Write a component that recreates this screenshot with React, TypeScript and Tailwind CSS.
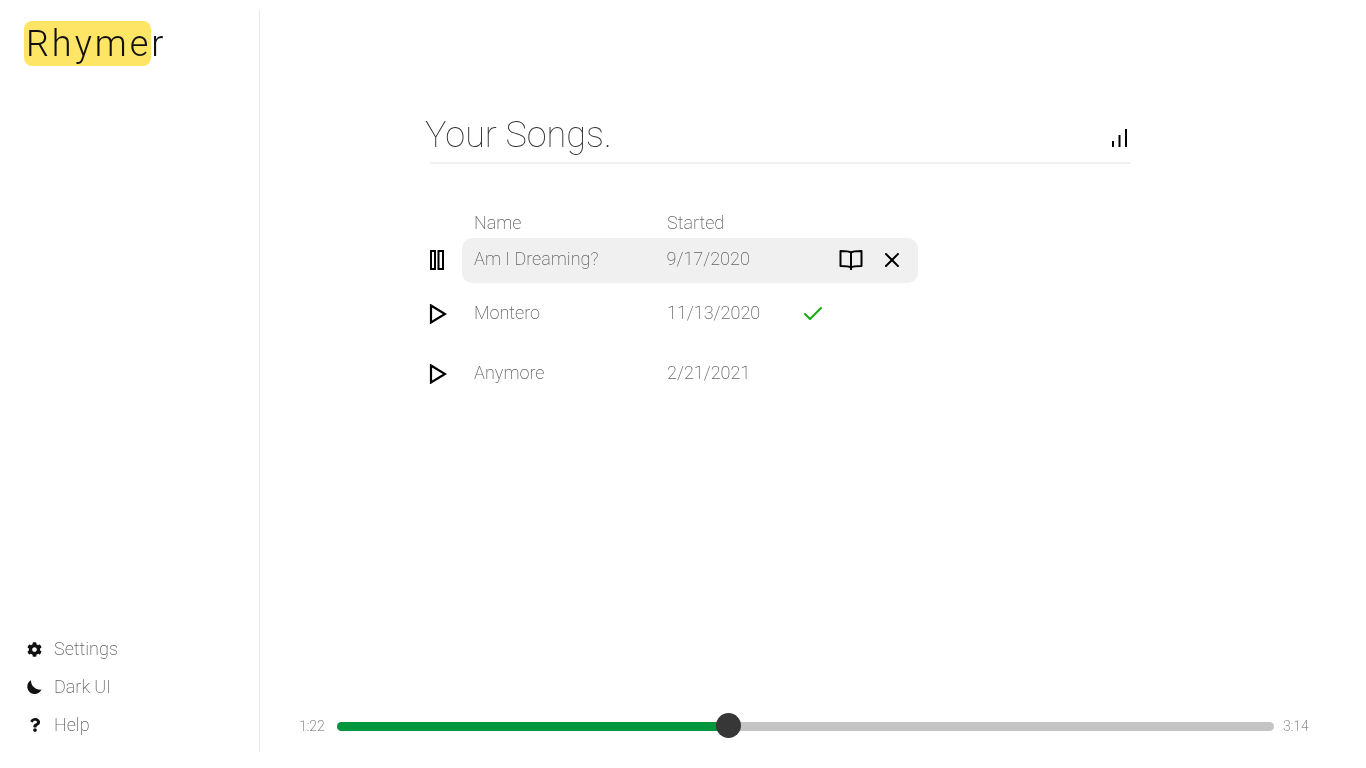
import React from 'react';
import { Check, X } from 'lucide-react';
import { FaCog, FaQuestion } from 'react-icons/fa';

interface Song {
  name: string;
  started: string;
  rowClass: string;
  iconClass: string;
  textClass: string;
}

const songs: Song[] = [
  { name: 'Am I Dreaming?', started: '9/17/2020', rowClass: 'h-[45px]', iconClass: '-mt-[2px]', textClass: '-mt-[5px]' },
  { name: 'Montero', started: '11/13/2020', rowClass: 'h-[45px] mt-[8px]', iconClass: 'mt-[1px]', textClass: '-mt-[3px]' },
  { name: 'Anymore', started: '2/21/2021', rowClass: 'h-[45px] mt-[15px]', iconClass: 'mt-[1px]', textClass: '-mt-[3px]' },
];

const BarsIcon = () => (
  <svg width="16" height="18" viewBox="0 0 16 18" fill="black">
    <rect x="0" y="12" width="2" height="6" />
    <rect x="6.5" y="6" width="2" height="12" />
    <rect x="13" y="0" width="2" height="18" />
  </svg>
);

const PauseIcon = () => (
  <svg width="16" height="20" viewBox="0 0 16 20" fill="none" stroke="black" strokeWidth="2">
    <rect x="2" y="1" width="4" height="18" />
    <rect x="9.5" y="1" width="4.5" height="18" />
  </svg>
);

const PlayIcon = () => (
  <svg width="18" height="20" viewBox="0 0 18 20" fill="none" stroke="black" strokeWidth="2.2" strokeLinejoin="miter">
    <path d="M2 1.5 L16 10 L2 18.5 Z" />
  </svg>
);

const BookIcon = () => (
  <svg width="24" height="22" viewBox="0 0 24 22" fill="none" stroke="black" strokeWidth="2">
    <path d="M12 3.5 C10 2 7 2 1.5 2 L1.5 17 C7 17 10 17 12 18.5 C14 17 17 17 22.5 17 L22.5 2 C17 2 14 2 12 3.5 Z" strokeLinejoin="round" />
    <path d="M12 3.5 L12 21" />
  </svg>
);

const MoonIcon = () => (
  <svg width="16" height="14" viewBox="0 0 16 14" fill="#111" className="overflow-visible">
    <path d="M4 0.2 A7.4 7.4 0 1 0 14.5 9.5 A9 9 0 0 1 4 0.2 Z" />
  </svg>
);

const NavItem = ({ icon, label }: { icon: React.ReactNode; label: string }) => (
  <div className="flex items-center h-[38px]">
    <div className="w-[15px] flex justify-center text-[#111]">{icon}</div>
    <span className="ml-[12px] -mt-[2px] text-[18px] font-extralight text-[#666]">{label}</span>
  </div>
);

export default function App() {
  return (
    <div className="h-[768px] w-[1366px] bg-white overflow-hidden">
      <div className="h-full flex pt-[10px] pb-[16px] [will-change:transform] font-['Roboto',sans-serif]">
        <aside className="w-[260px] shrink-0 border-r border-[#e8e8e8] flex flex-col justify-between pl-[27px] pb-[8px]">
          <div className="-ml-[3px] mt-[11px] text-[36px] leading-[45px] font-light tracking-[3px] text-[#111]">
            <div className="bg-[#ffd400]/60 rounded-lg w-[127px] h-[45px] whitespace-nowrap pl-[2px] pt-[1px]">Rhymer</div>
          </div>
          <nav className="flex flex-col">
            <NavItem icon={<FaCog size={15} />} label="Settings" />
            <NavItem icon={<MoonIcon />} label="Dark UI" />
            <NavItem icon={<FaQuestion size={14} />} label="Help" />
          </nav>
        </aside>

        <main className="flex-1 flex flex-col">
          <div className="flex-1 pl-[165px] pr-[235px]">
            <div className="mt-[102px] flex items-end justify-between h-[52px] ml-[5px] border-b-2 border-[#f2f2f2]">
              <h1 className="-ml-[5px] mb-[3px] text-[36px] leading-[48px] font-thin text-[#333]">Your Songs.</h1>
              <div className="mb-[15px] mr-[3px]"><BarsIcon /></div>
            </div>

            <div className="mt-[45px] ml-[49px] flex text-[18px] leading-[27px] font-extralight text-[#666]">
              <span className="w-[193px]">Name</span>
              <span>Started</span>
            </div>

            <div className="flex flex-col mt-[2px]">
              {songs.map((song, i) => (
                <div key={song.name} className={`flex items-center ${song.rowClass}`}>
                  <div className={`w-[37px] pl-[4px] shrink-0 ${song.iconClass}`}>{i === 0 ? <PauseIcon /> : <PlayIcon />}</div>
                  <div className={`w-[456px] h-[45px] rounded-[10px] flex items-center pl-[12px] pr-[14px] text-[18px] font-extralight text-[#666] ${i === 0 ? 'bg-black/[0.06]' : ''}`}>
                    <span className={`w-[193px] ${song.textClass}`}>{song.name}</span>
                    <span className={`${song.textClass} ${i === 0 ? 'w-[173px]' : 'w-[136px]'}`}>{song.started}</span>
                    {i === 0 && (
                      <>
                        <div className="-mt-[2px]"><BookIcon /></div>
                        <X className="ml-[17px] -mt-[2px]" size={24} color="black" strokeWidth={2} />
                      </>
                    )}
                    {i === 1 && <Check className="-ml-[2px]" size={24} color="#12ab12" strokeWidth={2} />}
                  </div>
                </div>
              ))}
            </div>
          </div>

          <div className="flex items-center h-[31px] mb-[10px] pl-[39px] text-[14px] font-extralight text-[#666]">
            <span className="w-[38px]">1:22</span>
            <div className="relative w-[937px] h-[9px] rounded-full bg-[#c4c4c4]">
              <div className="h-full w-[392px] rounded-full bg-[#00963c]" />
              <div className="absolute left-[379px] -top-[9px] w-[25px] h-[25px] rounded-full bg-[#373737]" />
            </div>
            <span className="ml-[9px]">3:14</span>
          </div>
        </main>
      </div>
    </div>
  );
}
